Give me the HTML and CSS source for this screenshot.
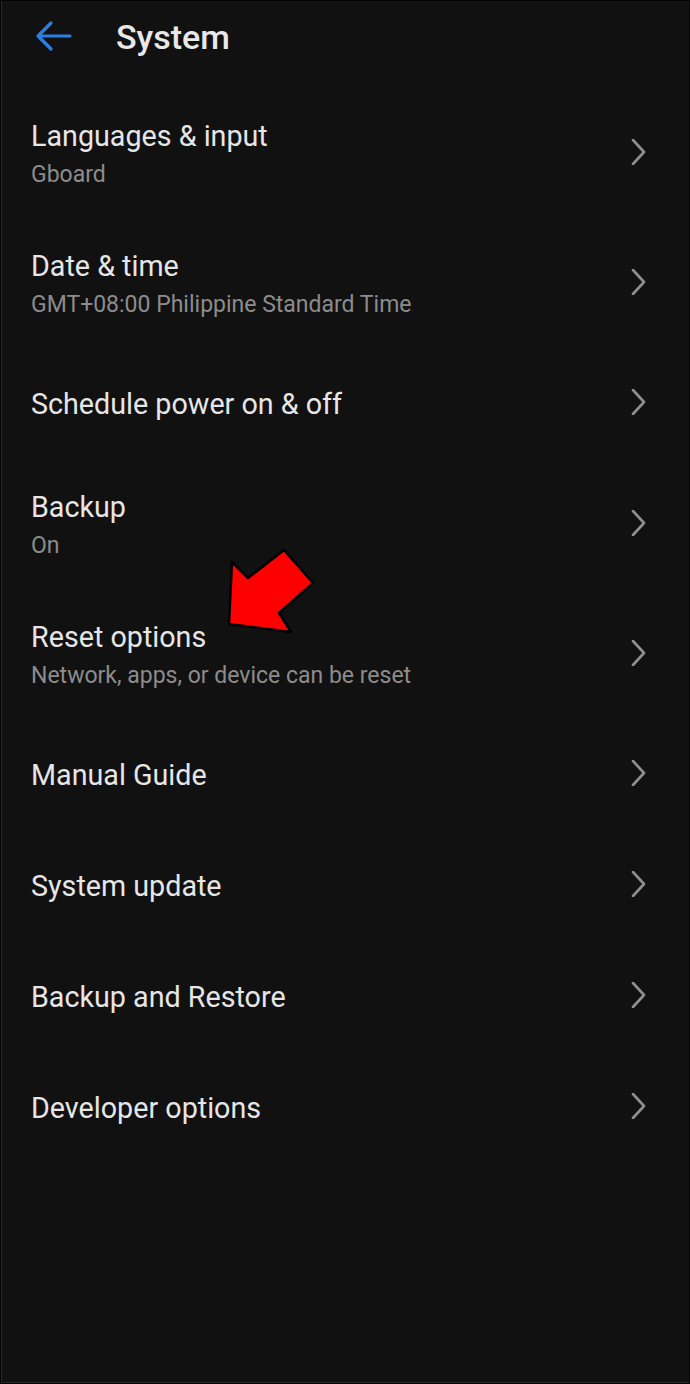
FILE: index.html
```
<!DOCTYPE html>
<html>

<head>
    <meta charset="utf-8" />
    <meta name="viewport" content="width=device-width, initial-scale=1" />
    <title>System</title>
    <link rel="stylesheet" href="styles.css">
</head>

<body>
    <div class="screen">
        <header class="topbar">
            <svg class="back" width="40" height="36" viewBox="0 0 40 36">
                <path d="M37 17 H5 M18 4 L5 17 L18 30" fill="none" stroke="#2b7fe3" stroke-width="3.2"
                    stroke-linecap="round" stroke-linejoin="round" />
            </svg>
            <h1 class="title">System</h1>
        </header>

        <div class="list">
            <div class="row">
                <div class="text">
                    <div class="label">Languages &amp; input</div>
                    <div class="sub">Gboard</div>
                </div>
                <svg class="chev" width="16" height="26" viewBox="0 0 16 26"><path d="M2 1 L13 13 L2 25" /></svg>
            </div>
            <div class="row">
                <div class="text">
                    <div class="label">Date &amp; time</div>
                    <div class="sub">GMT+08:00 Philippine Standard Time</div>
                </div>
                <svg class="chev" width="16" height="26" viewBox="0 0 16 26"><path d="M2 1 L13 13 L2 25" /></svg>
            </div>
            <div class="row single">
                <div class="text">
                    <div class="label">Schedule power on &amp; off</div>
                </div>
                <svg class="chev" width="16" height="26" viewBox="0 0 16 26"><path d="M2 1 L13 13 L2 25" /></svg>
            </div>
            <div class="row">
                <div class="text">
                    <div class="label">Backup</div>
                    <div class="sub">On</div>
                </div>
                <svg class="chev" width="16" height="26" viewBox="0 0 16 26"><path d="M2 1 L13 13 L2 25" /></svg>
            </div>
            <div class="row">
                <div class="text">
                    <div class="label">Reset options</div>
                    <div class="sub">Network, apps, or device can be reset</div>
                </div>
                <svg class="chev" width="16" height="26" viewBox="0 0 16 26"><path d="M2 1 L13 13 L2 25" /></svg>
            </div>
            <div class="row single">
                <div class="text">
                    <div class="label">Manual Guide</div>
                </div>
                <svg class="chev" width="16" height="26" viewBox="0 0 16 26"><path d="M2 1 L13 13 L2 25" /></svg>
            </div>
            <div class="row single">
                <div class="text">
                    <div class="label">System update</div>
                </div>
                <svg class="chev" width="16" height="26" viewBox="0 0 16 26"><path d="M2 1 L13 13 L2 25" /></svg>
            </div>
            <div class="row single">
                <div class="text">
                    <div class="label">Backup and Restore</div>
                </div>
                <svg class="chev" width="16" height="26" viewBox="0 0 16 26"><path d="M2 1 L13 13 L2 25" /></svg>
            </div>
            <div class="row single">
                <div class="text">
                    <div class="label">Developer options</div>
                </div>
                <svg class="chev" width="16" height="26" viewBox="0 0 16 26"><path d="M2 1 L13 13 L2 25" /></svg>
            </div>
        </div>

        <!-- annotation pointing at Reset options -->
        <svg class="pointer" width="100" height="100" viewBox="0 0 100 100">
            <polygon points="8,83 11,21 27,37 63,9 92,42 58,72 70,91" fill="#ff0000" stroke="#000"
                stroke-width="2.5" stroke-linejoin="round" />
        </svg>
    </div>
</body>

</html>
```

FILE: styles.css
```
body {
    margin: 0;
    background: #000;
    font-family: Roboto, "Noto Sans", sans-serif;
}

.screen {
    position: relative;
    width: 690px;
    height: 1384px;
    box-sizing: border-box;
    background: #111111;
    border: 1px solid #050505;
    box-shadow: inset 1px 0 0 #262626, inset 0 -1px 0 #262626;
    overflow: hidden;
}

.topbar {
    display: flex;
    align-items: center;
    height: 87px;
    padding-left: 32px;
    padding-bottom: 16px;
    box-sizing: border-box;
}

.back {
    display: block;
}

.title {
    margin: 0 0 0 43px;
    color: #e8e8e8;
    font-size: 34px;
    font-weight: 500;
}

.list {
    display: flex;
    flex-direction: column;
}

.row {
    display: flex;
    align-items: center;
    height: 130px;
    padding: 0 42px 0 30px;
}

.row.single {
    height: 111px;
}

.text {
    flex: 1;
    display: flex;
    flex-direction: column;
    gap: 8px;
}

.label {
    color: #e6e6e6;
    font-size: 28.7px;
}

.sub {
    color: #8c8c8c;
    font-size: 23px;
}

.chev {
    display: block;
    margin-top: -3px;
}

.chev path {
    fill: none;
    stroke: #8f8f8f;
    stroke-width: 2.6;
    stroke-linecap: round;
    stroke-linejoin: round;
}

.pointer {
    position: absolute;
    left: 220px;
    top: 540px;
}
```
